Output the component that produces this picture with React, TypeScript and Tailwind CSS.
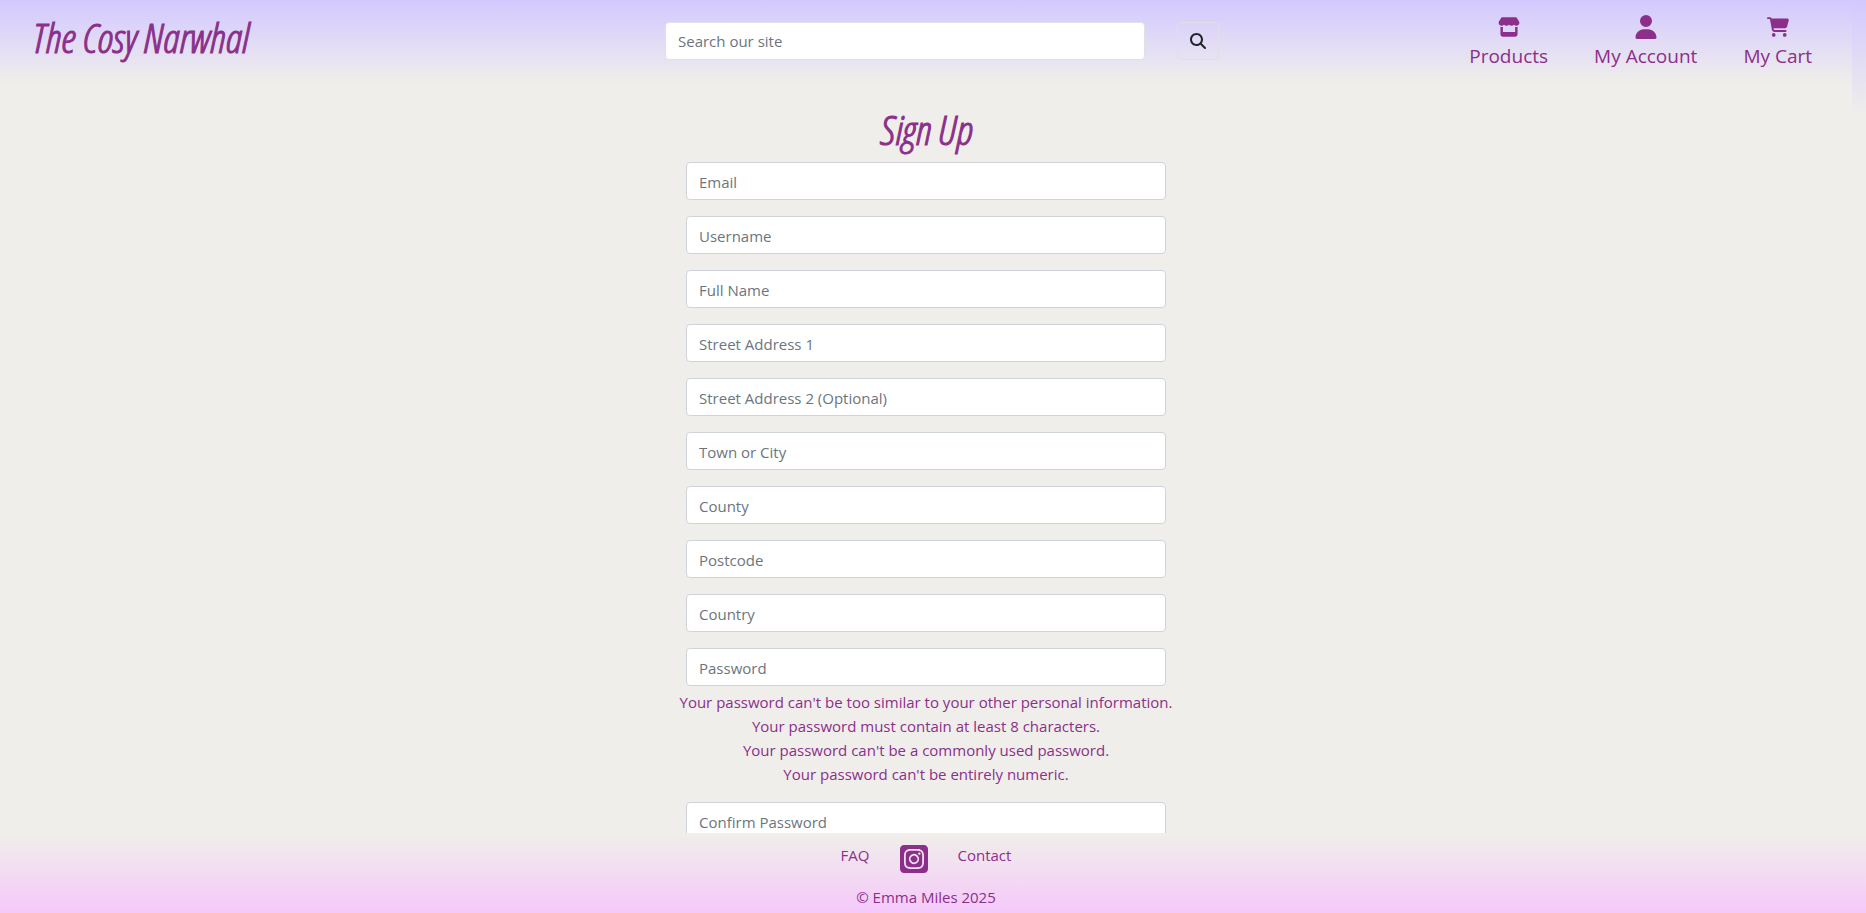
import React from "react";
import { FaStore, FaUser, FaCartShopping, FaMagnifyingGlass, FaSquareInstagram } from "react-icons/fa6";

const fields = [
  { id: "email", label: "Email", type: "email" },
  { id: "username", label: "Username", type: "text" },
  { id: "full-name", label: "Full Name", type: "text" },
  { id: "street-1", label: "Street Address 1", type: "text" },
  { id: "street-2", label: "Street Address 2 (Optional)", type: "text" },
  { id: "town", label: "Town or City", type: "text" },
  { id: "county", label: "County", type: "text" },
  { id: "postcode", label: "Postcode", type: "text" },
  { id: "country", label: "Country", type: "text" },
  { id: "password", label: "Password", type: "password" },
];

const hints = [
  "Your password can't be too similar to your other personal information.",
  "Your password must contain at least 8 characters.",
  "Your password can't be a commonly used password.",
  "Your password can't be entirely numeric.",
];

const script =
  "font-['Open_Sans_Condensed_Light','Open_Sans_Condensed','Roboto_Condensed',Lato,cursive] text-[41px] font-light italic [-webkit-text-stroke:1px_#8b2f8b]";

function Field({ id, label, type }: { id: string; label: string; type: string }) {
  return (
    <input
      id={id}
      type={type}
      aria-label={label}
      placeholder={label}
      className="h-[38px] w-full shrink-0 rounded border border-[#ced4da] bg-white px-3 pt-0.5 text-gray-900 placeholder:text-[#6c757d]"
    />
  );
}

function NavLink({ label, children }: { label: string; children: React.ReactNode }) {
  return (
    <a href="#" className="flex flex-col items-center">
      <span className="flex h-9 items-center pt-0.5">{children}</span>
      <span className="text-[19px] leading-6">{label}</span>
    </a>
  );
}

export default function App() {
  return (
    <div className="flex h-screen flex-col bg-[#f0eeea] bg-linear-to-b from-[#d3c8ff] to-[#f0eeea] to-[115px] font-['Open_Sans',sans-serif] text-[15px] leading-6 text-[#8b2f8b]">
      <div className="mr-[14px] flex min-h-0 flex-1 flex-col bg-[#f0eeea]">
        <header className="grid h-[84px] shrink-0 grid-cols-3 items-center bg-linear-to-b from-[#d3c8ff] to-[#f0eeea] pb-0.5">
          <a href="#" className={`${script} mb-2 pl-8 leading-10`}>The Cosy Narwhal</a>
          <form className="flex items-center justify-center gap-8 pl-8">
            <input
              type="search"
              aria-label="Search our site"
              placeholder="Search our site"
              className="h-[38px] w-[480px] rounded border border-[#dee2e6] bg-white px-3 placeholder:text-[#6c757d]"
            />
            <button type="submit" aria-label="Search" className="flex h-[38px] w-[42px] items-center justify-center rounded border border-[#dfdfe6] text-[#212529]">
              <FaMagnifyingGlass size={16} />
            </button>
          </form>
          <nav className="mb-1.5 flex justify-end gap-[46px] pr-10">
            <NavLink label="Products"><FaStore size={22} /></NavLink>
            <NavLink label="My Account"><FaUser size={24} /></NavLink>
            <NavLink label="My Cart"><FaCartShopping size={22} /></NavLink>
          </nav>
        </header>

        <main className="min-h-0 flex-1 overflow-hidden pt-5">
          <h1 className={`${script} pb-2 text-center leading-[50px]`}>Sign Up</h1>
          <form className="mx-auto flex w-[480px] flex-col gap-4">
            {fields.map((f) => <Field key={f.id} {...f} />)}
            <ul className="-mt-3 flex flex-col items-center whitespace-nowrap">
              {hints.map((h) => <li key={h}>{h}</li>)}
            </ul>
            <Field id="confirm-password" label="Confirm Password" type="password" />
          </form>
        </main>
      </div>

      <footer className="flex h-20 shrink-0 flex-col items-center justify-between bg-linear-to-b from-[#f0eeea] to-[#f5c8fa] pt-2.5 pr-[14px] pb-1">
        <div className="flex gap-7">
          <a href="#">FAQ</a>
          <a href="#" aria-label="Instagram"><FaSquareInstagram size={32} /></a>
          <a href="#">Contact</a>
        </div>
        <p>© Emma Miles 2025</p>
      </footer>
    </div>
  );
}
